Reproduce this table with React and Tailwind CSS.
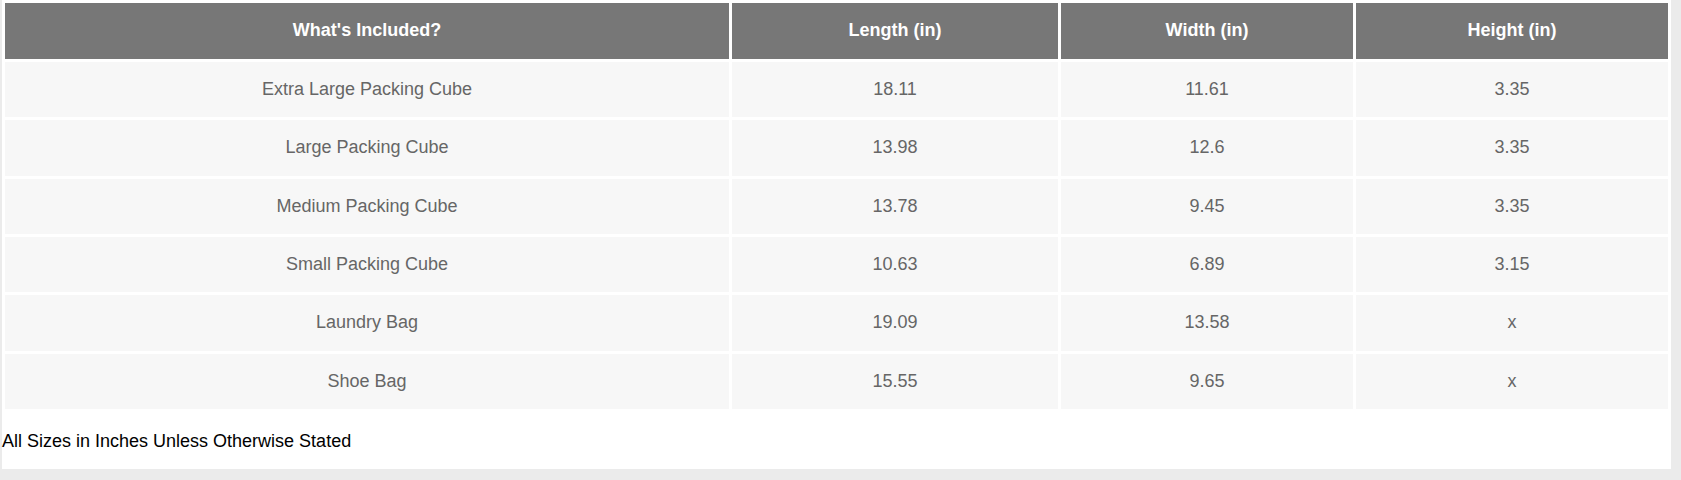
import React from "react";

const rows = [
  ["Extra Large Packing Cube", "18.11", "11.61", "3.35"],
  ["Large Packing Cube", "13.98", "12.6", "3.35"],
  ["Medium Packing Cube", "13.78", "9.45", "3.35"],
  ["Small Packing Cube", "10.63", "6.89", "3.15"],
  ["Laundry Bag", "19.09", "13.58", "x"],
  ["Shoe Bag", "15.55", "9.65", "x"],
];

export default function App() {
  return (
    <div
      className="min-h-[480px] w-full bg-[#ebebeb]"
      style={{ fontFamily: '"Liberation Sans", Arial, sans-serif' }}
    >
      <div className="ml-[2px] w-[1669px] h-[469px] bg-white">
        <table className="w-[1669px] table-fixed border-separate border-spacing-[3px] text-[18px]">
          <colgroup>
            <col className="w-[724px]" />
            <col className="w-[326px]" />
            <col className="w-[292px]" />
            <col className="w-[312px]" />
          </colgroup>
          <thead>
            <tr className="h-[56px]">
              {["What's Included?", "Length (in)", "Width (in)", "Height (in)"].map((h) => (
                <th key={h} className="bg-[#777777] text-white font-bold text-center align-middle p-0 pb-[1px]">
                  {h}
                </th>
              ))}
            </tr>
          </thead>
          <tbody>
            {rows.map((r) => (
              <tr key={r[0]} className="h-[55.33px]">
                {r.map((c, i) => (
                  <td key={i} className="bg-[#f7f7f7] text-[#666666] text-center align-middle p-0">
                    {c}
                  </td>
                ))}
              </tr>
            ))}
          </tbody>
        </table>
        <p className="mt-[19px] text-[18px] leading-[normal] text-black">
          All Sizes in Inches Unless Otherwise Stated
        </p>
      </div>
    </div>
  );
}
